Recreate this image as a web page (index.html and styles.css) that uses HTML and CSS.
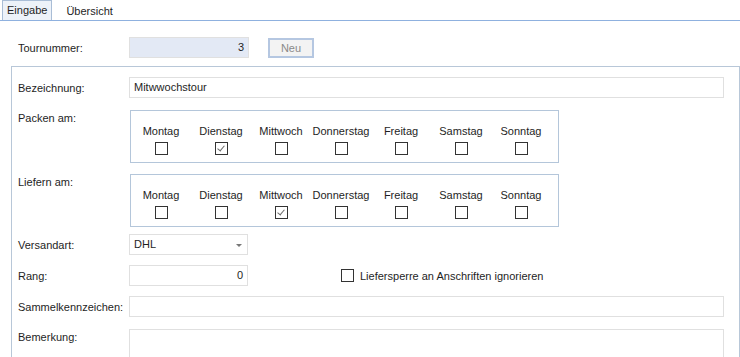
FILE: index.html
```html
<!DOCTYPE html>
<html lang="de">
<head>
    <meta charset="UTF-8">
    <title>Tour</title>
    <link rel="stylesheet" href="styles.css">
</head>
<body>
    <div class="tabs">
        <div class="tab active">Eingabe</div>
        <div class="tab">Übersicht</div>
    </div>

    <div class="topRow">
        <div class="lbl">Tournummer:</div>
        <div class="inp num readonly">3</div>
        <div class="btn">Neu</div>
    </div>

    <div class="group">
        <div class="row">
            <div class="lbl">Bezeichnung:</div>
            <div class="inp wide">Mitwwochstour</div>
        </div>

        <div class="row days packen">
            <div class="lbl top">Packen am:</div>
            <div class="dayBox">
                <span>Montag</span><span>Dienstag</span><span>Mittwoch</span><span>Donnerstag</span><span>Freitag</span><span>Samstag</span><span>Sonntag</span>
                <i class="cb"></i><i class="cb on"></i><i class="cb"></i><i class="cb"></i><i class="cb"></i><i class="cb"></i><i class="cb"></i>
            </div>
        </div>

        <div class="row days liefern">
            <div class="lbl top">Liefern am:</div>
            <div class="dayBox">
                <span>Montag</span><span>Dienstag</span><span>Mittwoch</span><span>Donnerstag</span><span>Freitag</span><span>Samstag</span><span>Sonntag</span>
                <i class="cb"></i><i class="cb"></i><i class="cb on"></i><i class="cb"></i><i class="cb"></i><i class="cb"></i><i class="cb"></i>
            </div>
        </div>

        <div class="row versand">
            <div class="lbl">Versandart:</div>
            <div class="inp small select">DHL<b class="arrow"></b></div>
        </div>

        <div class="row rang">
            <div class="lbl">Rang:</div>
            <div class="inp small num">0</div>
            <div class="check"><i class="cb"></i>Liefersperre an Anschriften ignorieren</div>
        </div>

        <div class="row sammel">
            <div class="lbl">Sammelkennzeichen:</div>
            <div class="inp wide"></div>
        </div>

        <div class="row bemerk">
            <div class="lbl top">Bemerkung:</div>
            <div class="inp wide area"></div>
        </div>
    </div>
</body>
</html>
```

FILE: styles.css
```css
body {
    margin: 0;
    font-family: "Liberation Sans", Arial, sans-serif;
    font-size: 11px;
    color: #1e1e1e;
    background-color: #fff;
}

.tabs {
    display: flex;
    align-items: flex-end;
    height: 20px;
    padding-left: 2px;
    border-bottom: 1px solid #8fb1df;
}

.tab {
    height: 18px;
    line-height: 18px;
    padding: 0 12px 0 4px;
}

.tab.active {
    padding: 0 4px;
    height: 19px;
    background-color: #edf2f9;
    border: 1px solid #a9bdd6;
    border-bottom: none;
    margin-right: 10px;
}

.topRow {
    display: flex;
    align-items: center;
    margin-top: 16px;
    padding-left: 18px;
}

.lbl {
    width: 111px;
    flex-shrink: 0;
}

.lbl.top {
    align-self: flex-start;
    padding-top: 2px;
}

.inp {
    height: 19px;
    line-height: 19px;
    border: 1px solid #e0e0e0;
    padding: 0 4px;
    box-sizing: content-box;
}

.num {
    text-align: right;
}

.readonly {
    width: 110px;
    background-color: #e3e9f5;
}

.btn {
    margin-left: 19px;
    width: 42px;
    height: 16px;
    line-height: 16px;
    border: 2px solid #b5c7e1;
    background-color: #f3f3f3;
    color: #8a8a8a;
    text-align: center;
}

.group {
    margin: 8px 0 0 11px;
    border: 1px solid #b8c7d8;
    border-bottom: none;
    padding: 10px 15px 0 6px;
    height: 281px;
    overflow: hidden;
}

.row {
    display: flex;
    align-items: center;
}

.wide {
    flex: 1;
}

.small {
    width: 109px;
}

.days.packen {
    margin-top: 12px;
}

.days.liefern {
    margin-top: 11px;
}

.dayBox {
    margin-left: 1px;
    width: 427px;
    height: 51px;
    border: 1px solid #b4c6da;
    display: grid;
    grid-template-columns: repeat(7, 60px);
    grid-template-rows: 28px 16px;
    justify-items: center;
    align-items: end;
}

.dayBox span {
    padding-bottom: 2px;
}

.cb {
    display: block;
    width: 11px;
    height: 11px;
    border: 1px solid #333;
    background-color: #fff;
    position: relative;
}

.cb.on::after {
    content: "";
    position: absolute;
    left: 3px;
    top: 1px;
    width: 3px;
    height: 6px;
    border-right: 1px solid #6a6a6a;
    border-bottom: 1px solid #6a6a6a;
    transform: rotate(40deg);
}

.versand {
    margin-top: 7px;
}

.select {
    position: relative;
}

.arrow {
    position: absolute;
    right: 5px;
    top: 9px;
    border-left: 3px solid transparent;
    border-right: 3px solid transparent;
    border-top: 3px solid #777;
}

.rang {
    margin-top: 10px;
}

.check {
    display: flex;
    align-items: center;
    margin-left: 93px;
}

.check .cb {
    margin-right: 6px;
}

.sammel {
    margin-top: 10px;
}

.bemerk {
    margin-top: 12px;
}

.area {
    height: 40px;
    border-bottom: none;
}
```
